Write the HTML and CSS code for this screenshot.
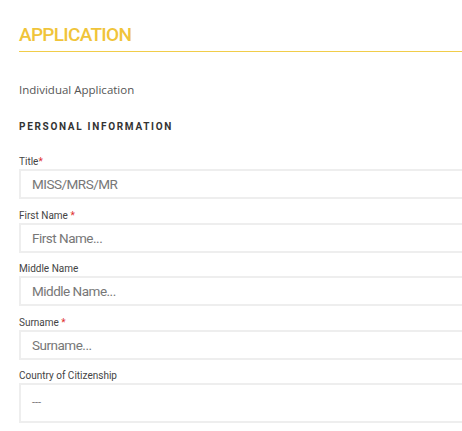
FILE: index.html
```html
<!DOCTYPE html>
<html>
<head>
<meta charset="utf-8">
<link rel="stylesheet" href="styles.css">
</head>
<body>
<div class="page">
  <h1 class="title">APPLICATION</h1>
  <p class="intro">Individual Application</p>
  <h2 class="section">PERSONAL INFORMATION</h2>
  <div class="field">
    <label class="label">Title<span class="req">*</span></label>
    <div class="input">MISS/MRS/MR</div>
  </div>
  <div class="field">
    <label class="label">First Name <span class="req">*</span></label>
    <div class="input">First Name...</div>
  </div>
  <div class="field">
    <label class="label">Middle Name</label>
    <div class="input">Middle Name...</div>
  </div>
  <div class="field">
    <label class="label">Surname <span class="req">*</span></label>
    <div class="input">Surname...</div>
  </div>
  <div class="field">
    <label class="label">Country of Citizenship</label>
    <div class="input select">---</div>
  </div>
</div>
</body>
</html>
```

FILE: styles.css
```css
html, body {
  margin: 0;
  padding: 0;
  background: #fff;
  overflow: hidden;
}
.page {
  width: 480px;
  padding: 0 0 0 19px;
  font-family: "Open Sans", sans-serif;
}
.title {
  margin: 0;
  padding-top: 23px;
  height: 28px;
  border-bottom: 1px solid #f1cd4a;
  font-family: Roboto, sans-serif;
  font-weight: 500;
  font-size: 19px;
  line-height: 24px;
  letter-spacing: -0.7px;
  color: #f0c43a;
}
.intro {
  margin: 29px 0 0;
  font-size: 11.5px;
  line-height: 18px;
  color: #555;
}
.section {
  margin: 21px 0 0;
  font-family: Roboto, sans-serif;
  font-weight: 700;
  font-size: 10px;
  line-height: 14px;
  letter-spacing: 1.7px;
  color: #333;
}
.section + .field {
  margin-top: 21px;
}
.label {
  display: block;
  font-family: Roboto, sans-serif;
  font-size: 10px;
  line-height: 14px;
  color: #444;
}
.req {
  color: #e03030;
}
.input {
  box-sizing: border-box;
  height: 30px;
  margin-bottom: 9.5px;
  border: 2px solid #eeeeee;
  padding: 0 0 0 11px;
  font-family: Roboto, sans-serif;
  font-size: 13.5px;
  letter-spacing: -0.5px;
  line-height: 26px;
  color: #777;
}
.select {
  height: 40px;
  line-height: 36px;
  font-size: 11px;
  letter-spacing: 0;
}
```
